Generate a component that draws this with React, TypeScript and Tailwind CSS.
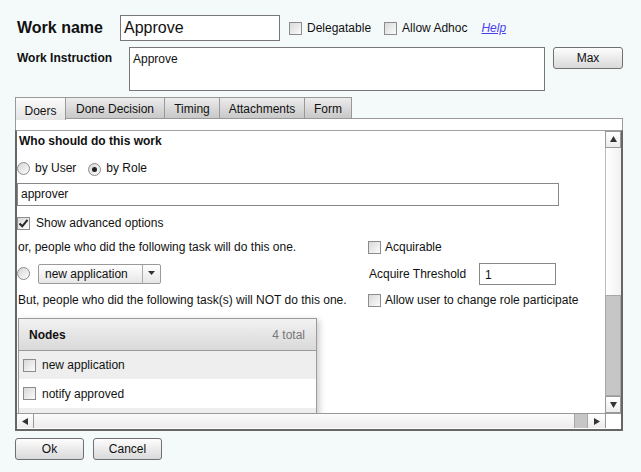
import React from "react";

const Box = ({ checked = false }: { checked?: boolean }) => (
  <span className="inline-flex w-[13px] h-[13px] shrink-0 items-center justify-center border border-[#8c8c8c] bg-gradient-to-br from-[#d9d9d9] to-[#fbfbfb]">
    {checked && (
      <svg width="11" height="11" viewBox="0 0 11 11">
        <path d="M1.5 5.5 L4.3 8.3 L9.5 1.8" fill="none" stroke="#262626" strokeWidth="2" />
      </svg>
    )}
  </span>
);

const Radio = ({ on = false }: { on?: boolean }) => (
  <span className="inline-flex w-[13px] h-[13px] shrink-0 items-center justify-center rounded-full border border-[#8c8c8c] bg-gradient-to-br from-[#d6d6d6] to-[#fcfcfc]">
    {on && <span className="w-[5px] h-[5px] rounded-full bg-[#222]" />}
  </span>
);

const Tri = ({ dir }: { dir: "up" | "down" | "left" | "right" }) => {
  const d =
    dir === "up"
      ? "M1 7 L4.5 1 L8 7 Z"
      : dir === "down"
      ? "M1 2 L8 2 L4.5 8 Z"
      : dir === "left"
      ? "M7 1 L7 8 L1 4.5 Z"
      : "M2 1 L2 8 L8 4.5 Z";
  return (
    <svg width="9" height="9" viewBox="0 0 9 9">
      <path d={d} fill="#333" />
    </svg>
  );
};

const Btn = ({ children, w }: { children: React.ReactNode; w: string }) => (
  <div
    className={`${w} h-[22px] flex items-center justify-center rounded-[3px] border border-[#707070] bg-gradient-to-b from-[#fdfdfd] to-[#d9d9d9] text-[#111]`}
  >
    {children}
  </div>
);

export default function App() {
  const tabs = ["Doers", "Done Decision", "Timing", "Attachments", "Form"];
  const tabW = ["w-[51px]", "w-[99px]", "w-[55px]", "w-[85px]", "w-[47px]"];
  return (
    <div className="w-[641px] h-[472px] bg-[#f4fafa] pl-[15px] pt-[15px] text-[12px] leading-[14px] text-[#111] font-['Liberation_Sans',Arial,sans-serif] overflow-hidden">
      {/* Row 1 */}
      <div className="flex items-center h-[26px]">
        <div className="ml-[2px] w-[103px] text-[16px] font-bold leading-[20px]">Work name</div>
        <div className="w-[160px] h-[26px] border border-[#777] bg-white px-[3px] text-[16px] leading-[24px]">Approve</div>
        <div className="ml-[9px] flex items-center gap-[5px]">
          <Box />
          <span>Delegatable</span>
        </div>
        <div className="ml-[13px] flex items-center gap-[5px]">
          <Box />
          <span>Allow Adhoc</span>
        </div>
        <span className="ml-[14px] italic underline text-[#4b3ff0]">Help</span>
      </div>

      {/* Row 2 */}
      <div className="mt-[6px] flex items-start">
        <div className="ml-[2px] w-[112px] pt-[4px] font-bold">Work Instruction</div>
        <div className="w-[416px] h-[44px] border border-[#777] bg-white px-[3px] pt-[4px]">Approve</div>
        <div className="ml-[8px]">
          <Btn w="w-[70px]">Max</Btn>
        </div>
      </div>

      {/* Tabs */}
      <div className="mt-[6px] flex h-[22px] relative z-10">
        {tabs.map((t, i) => (
          <div
            key={t}
            className={`${tabW[i]} h-[22px] flex items-center justify-center border border-[#999] ${
              i > 0 ? "border-l-0" : ""
            } ${
              i === 0
                ? "bg-gradient-to-b from-[#fafafa] to-[#e4e4e4] border-b-0 pt-[3px] h-[23px]"
                : "bg-gradient-to-b from-[#ececec] to-[#c8c8c8] pt-[1px]"
            }`}
          >
            {t}
          </div>
        ))}
      </div>

      {/* Panel */}
      <div className="-mt-[1px] w-[608px] h-[313px] bg-white flex flex-col">
        <div className="h-[12px] border-t border-x border-[#9a9a9a]" />
        <div className="flex-1 flex flex-col border-t border-l-2 border-r-2 border-b-2 border-[#666] border-t-[#a0a0a0]">
          <div className="flex h-[282px]">
            {/* content */}
            <div className="w-[588px] h-[282px] overflow-hidden">
              <div className="h-[20px] leading-[20px] pl-[2px] font-bold">Who should do this work</div>
              <div className="mt-[7px] h-[20px] flex items-center">
                <Radio />
                <span className="ml-[5px]">by User</span>
                <span className="ml-[12px]">
                  <Radio on />
                </span>
                <span className="ml-[5px]">by Role</span>
              </div>
              <div className="mt-[5px] w-[542px] h-[23px] border border-[#888] pl-[3px] leading-[21px]">approver</div>
              <div className="mt-[7px] h-[20px] flex items-center">
                <Box checked />
                <span className="ml-[6px]">Show advanced options</span>
              </div>

              <div className="mt-[4px] h-[20px] flex items-center">
                <div className="w-[351px] pl-[1px]">or, people who did the following task will do this one.</div>
                <Box />
                <span className="ml-[4px]">Acquirable</span>
              </div>
              <div className="mt-[6px] h-[21px] flex items-center">
                <div className="w-[351px] flex items-center">
                  <Radio />
                  <div className="ml-[8px] w-[123px] h-[20px] flex items-center rounded-[2px] border border-[#9a9a9a] bg-gradient-to-b from-[#ffffff] to-[#e6e6e6]">
                    <span className="flex-1 pl-[6px]">new application</span>
                    <span className="w-[18px] h-full border-l border-[#aaa] flex items-center justify-center">
                      <svg width="7" height="5" viewBox="0 0 7 5">
                        <path d="M0 0 L7 0 L3.5 4 Z" fill="#333" />
                      </svg>
                    </span>
                  </div>
                </div>
                <div className="w-[111px] pl-[1px]">Acquire Threshold</div>
                <div className="w-[77px] h-[22px] border border-[#888] pl-[5px] leading-[21px] pt-[1px]">1</div>
              </div>
              <div className="mt-[6px] h-[20px] flex items-center">
                <div className="w-[351px] pl-[1px]">But, people who did the following task(s) will NOT do this one.</div>
                <Box />
                <span className="ml-[4px]">Allow user to change role participate</span>
              </div>

              {/* Nodes grid */}
              <div className="mt-[8px] ml-[1px] w-[299px] shadow-[3px_2px_6px_rgba(0,0,0,0.18)]">
                <div className="h-[33px] border border-[#9a9a9a] bg-gradient-to-b from-[#f2f2f2] to-[#d9d9d9] flex items-center justify-between pl-[10px] pr-[11px]">
                  <span className="font-bold">Nodes</span>
                  <span className="text-[#777]">4 total</span>
                </div>
                <div className="border-x border-[#9a9a9a]">
                  <div className="h-[28px] bg-[#eeeeee] flex items-center pl-[4px]">
                    <Box />
                    <span className="ml-[6px]">new application</span>
                  </div>
                  <div className="h-[29px] bg-white flex items-center pl-[4px]">
                    <Box />
                    <span className="ml-[6px]">notify approved</span>
                  </div>
                  <div className="h-[28px] bg-[#eeeeee]" />
                </div>
              </div>
            </div>

            {/* vertical scrollbar */}
            <div className="w-[16px] h-[282px] flex flex-col">
              <div className="h-[17px] border border-[#999] bg-gradient-to-b from-[#ffffff] to-[#ececec] flex items-center justify-center">
                <Tri dir="up" />
              </div>
              <div className="flex-1 border-l border-[#bbb] bg-gradient-to-r from-[#ffffff] to-[#f1f1f1]" />
              <div className="h-[101px] border border-[#a8a8a8] bg-[#c6c6c6]" />
              <div className="h-[17px] border border-[#999] bg-gradient-to-b from-[#ffffff] to-[#ececec] flex items-center justify-center">
                <Tri dir="down" />
              </div>
            </div>
          </div>

          {/* horizontal scrollbar */}
          <div className="flex h-[15px]">
            <div className="w-[588px] flex border-t border-[#999]">
              <div className="w-[17px] border-r border-[#999] bg-gradient-to-b from-[#ffffff] to-[#ececec] flex items-center justify-center">
                <Tri dir="left" />
              </div>
              <div className="flex-1 bg-gradient-to-b from-[#fbfbfb] to-[#ececec]" />
              <div className="w-[14px] border-x border-[#a8a8a8] bg-[#c6c6c6]" />
              <div className="w-[17px] bg-gradient-to-b from-[#ffffff] to-[#ececec] flex items-center justify-center">
                <Tri dir="right" />
              </div>
            </div>
            <div className="w-[16px] bg-white border-l border-t border-[#999]" />
          </div>
        </div>
      </div>

      {/* Bottom buttons */}
      <div className="mt-[7px] flex gap-[9px]">
        <Btn w="w-[69px]">Ok</Btn>
        <Btn w="w-[69px]">Cancel</Btn>
      </div>
    </div>
  );
}
